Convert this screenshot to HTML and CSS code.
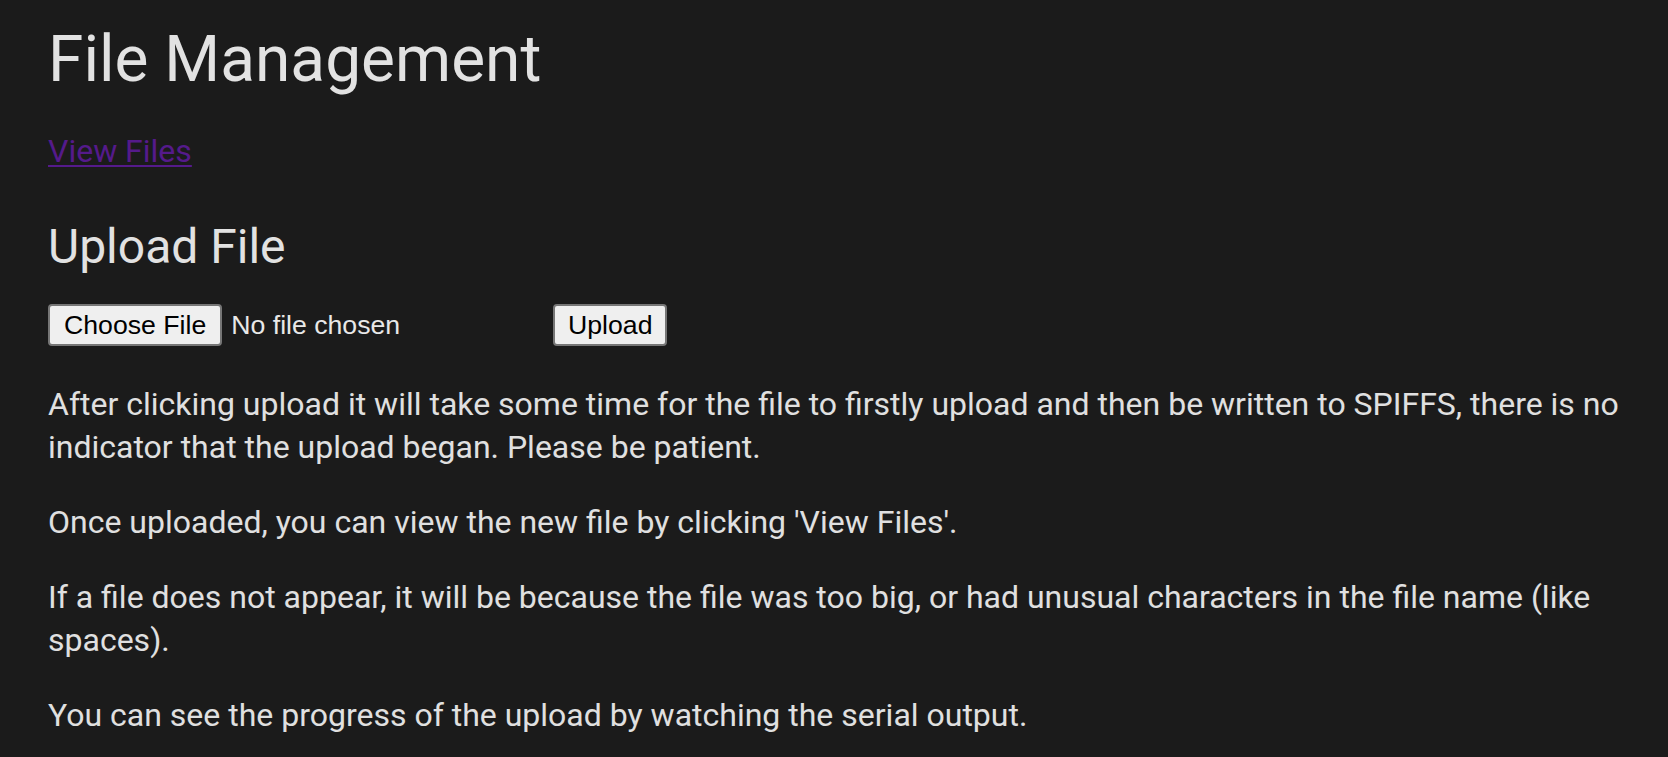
FILE: index.html
```html
<!DOCTYPE html>
<html lang="en">
<head>
<meta charset="utf-8">
<title>File Management</title>
<link rel="stylesheet" href="styles.css">
</head>
<body>
<main class="page">
  <h1 class="title">File Management</h1>
  <p class="nav"><a class="nav-link" href="#">View Files</a></p>
  <h2 class="subtitle">Upload File</h2>
  <form class="upload" action="#" onsubmit="return false">
    <input class="file-input" type="file" name="data">
    <button class="btn" type="submit">Upload</button>
  </form>
  <p class="text">After clicking upload it will take some time for the file to firstly upload and then be written to SPIFFS, there is no indicator that the upload began. Please be patient.</p>
  <p class="text">Once uploaded, you can view the new file by clicking 'View Files'.</p>
  <p class="text">If a file does not appear, it will be because the file was too big, or had unusual characters in the file name (like spaces).</p>
  <p class="text">You can see the progress of the upload by watching the serial output.</p>
</main>
</body>
</html>
```
FILE: styles.css
```css
html, body {
  margin: 0;
  padding: 0;
  background: #1b1b1b;
}

body {
  color: #e0e0e0;
  font-family: Roboto, "Liberation Sans", sans-serif;
  font-size: 32px;
}

.page {
  padding: 17px 20px 0 48px;
}

.title {
  margin: 0;
  font-size: 64px;
  line-height: 85px;
  font-weight: 400;
  color: #e2e2e2;
}

.nav {
  margin: 28px 0 0;
  line-height: 43px;
}

.nav-link {
  color: #551a8b;
  text-decoration: underline;
  text-decoration-thickness: 2px;
  text-underline-offset: 3px;
}

.subtitle {
  margin: 42px 0 0;
  font-size: 48px;
  line-height: 64px;
  font-weight: 400;
  color: #e2e2e2;
}

.upload {
  display: flex;
  align-items: center;
  gap: 7px;
  margin: 25px 0 37px;
}

.file-input {
  width: 498px;
  height: 42px;
  padding: 0;
  margin: 0;
  font-family: "Liberation Sans", Arial, sans-serif;
  font-size: 26.67px;
  color: #e8e8e8;
  background: transparent;
}

.file-input::file-selector-button {
  height: 42px;
  padding: 0 14px;
  margin: 0 9px 0 0;
  font-family: "Liberation Sans", Arial, sans-serif;
  font-size: 26.67px;
  color: #000;
  background: #efefef;
  border: 2px solid #767676;
  border-radius: 4px;
}

.btn {
  height: 42px;
  padding: 0 13px;
  margin: 0;
  font-family: "Liberation Sans", Arial, sans-serif;
  font-size: 26.67px;
  color: #000;
  background: #efefef;
  border: 2px solid #767676;
  border-radius: 4px;
}

.text {
  margin: 0 0 32px;
  line-height: 43px;
}
```
